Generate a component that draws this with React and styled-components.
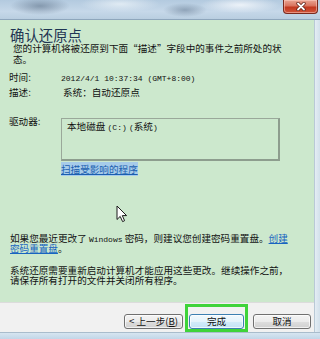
import React from "react";
import styled, { createGlobalStyle } from "styled-components";

const Global = createGlobalStyle`
  html, body { margin: 0; padding: 0; }
  body { width: 320px; height: 339px; overflow: hidden; background: #dbe6ef; }
`;

const Window = styled.div`
  position: relative;
  width: 320px;
  height: 339px;
  display: flex;
  flex-direction: column;
  overflow: hidden;
  font-family: "Noto Sans CJK SC", "Noto Sans", sans-serif;
  color: #111111;
`;

const TitleBar = styled.div`
  flex: none;
  height: 19px;
  display: flex;
  justify-content: flex-end;
  align-items: flex-start;
  padding-right: 2px;
  border-bottom: 1px solid #8ea6bc;
  background:
    radial-gradient(ellipse 30px 9px at 40px 6px, rgba(95, 115, 138, 0.6), transparent),
    radial-gradient(ellipse 22px 7px at 185px 10px, rgba(100, 122, 146, 0.55), transparent),
    radial-gradient(ellipse 40px 8px at 120px 4px, rgba(240, 246, 250, 0.7), transparent),
    radial-gradient(ellipse 40px 8px at 240px 5px, rgba(245, 248, 252, 0.85), transparent),
    linear-gradient(to bottom, #b3cadf 0%, #c6d8e9 60%, #b9cee0 100%);
`;

const CloseButton = styled.div`
  width: 35px;
  height: 14px;
  box-sizing: border-box;
  border: 1px solid #7a2a1e;
  border-top: none;
  border-radius: 0 0 4px 4px;
  background: linear-gradient(to bottom, #e9a593 0%, #d9735e 45%, #c2381f 55%, #d0553b 100%);
  display: flex;
  align-items: center;
  justify-content: center;
  box-shadow: inset 0 0 0 1px rgba(255, 210, 200, 0.5);
`;

const Middle = styled.div`
  flex: 1;
  display: flex;
  min-height: 0;
`;

const Client = styled.div`
  flex: 1;
  display: flex;
  flex-direction: column;
  min-height: 0;
`;

const RightEdge = styled.div`
  width: 5px;
  flex: none;
  border-left: 1px solid #b9c9d6;
  background: linear-gradient(to right, #e4edf4, #d2e0eb);
`;

const BottomEdge = styled.div`
  flex: none;
  height: 7px;
  box-sizing: border-box;
  border-top: 1px solid #a9bccc;
  background: linear-gradient(to bottom, #d7e5f1, #c2d6e8);
`;

const Panel = styled.div`
  flex: 1;
  min-height: 0;
  overflow: hidden;
  background: #cce8cd;
  display: flex;
  flex-direction: column;
  padding: 7px 0 17px 9px;
  box-sizing: border-box;
`;

const Heading = styled.div`
  flex: none;
  font-size: 14.4px;
  line-height: 16px;
  height: 16px;
  margin-left: 1px;
  color: #1f3553;
`;

const Para = styled.div`
  flex: none;
  font-size: 9.6px;
  line-height: ${(p) => p.$lh || 10}px;
  margin-left: ${(p) => p.$indent || 1}px;
  margin-top: ${(p) => p.$mt || 0}px;
  white-space: nowrap;
`;

const Line = styled.div`
  height: ${(p) => p.$lh || 10}px;
`;

const Ascii = styled.span`
  font-family: "Liberation Mono", "DejaVu Sans Mono", monospace;
  font-size: 8px;
`;

const InfoGrid = styled.div`
  flex: none;
  display: grid;
  grid-template-columns: 52px 1fr;
  margin-top: ${(p) => p.$mt}px;
  font-size: 9.6px;
  line-height: 12.5px;
  align-items: start;
`;

const Label = styled.div`
  white-space: nowrap;
`;

const Value = styled.div`
  white-space: nowrap;
  padding-left: ${(p) => p.$pl || 0}px;
`;

const ListBox = styled.div`
  margin-top: 3px;
  width: 219px;
  height: 43px;
  box-sizing: border-box;
  border-top: 1px solid #9aa89a;
  border-left: 1px solid #9aa89a;
  border-right: 2px solid #8d9d8e;
  border-bottom: 2px solid #8d9d8e;
  padding: 1px 5px;
  line-height: 12px;
`;

const LinkRow = styled.div`
  flex: none;
  margin: 3px 0 0 52px;
  font-size: 9.6px;
  line-height: 10px;
`;

const Selected = styled.span`
  background: #a6cbe9;
  color: #1b5fb0;
  text-decoration: underline;
`;

const Link = styled.span`
  color: #1864c0;
  text-decoration: underline;
`;

const BottomGroup = styled.div`
  margin-top: auto;
  display: flex;
  flex-direction: column;
`;

const Footer = styled.div`
  flex: none;
  height: 30px;
  box-sizing: border-box;
  background: #f1f1f1;
  border-top: 1px solid #dcdcdc;
  display: flex;
  justify-content: flex-end;
  align-items: flex-start;
  padding-right: 3px;
`;

const Button = styled.div`
  width: ${(p) => p.$w}px;
  height: 15px;
  box-sizing: border-box;
  margin-top: ${(p) => p.$mt || 0}px;
  margin-left: ${(p) => p.$ml || 0}px;
  border: 1px solid ${(p) => (p.$default ? "#3c7fb1" : "#707070")};
  border-radius: 3px;
  background: ${(p) =>
    p.$default
      ? "linear-gradient(to bottom, #f2f9fd 0%, #e4f3fb 50%, #d2ebf9 51%, #c4e3f5 100%)"
      : "linear-gradient(to bottom, #f4f4f4 0%, #ebebeb 50%, #dedede 51%, #d0d0d0 100%)"};
  box-shadow: inset 0 0 0 1px rgba(255, 255, 255, 0.7);
  font-size: 9.6px;
  line-height: 13px;
  text-align: center;
  white-space: nowrap;
`;

const Highlight = styled.div`
  margin: 1px 0 0 2px;
  width: 63px;
  height: 28px;
  box-sizing: border-box;
  border: 3px solid #3fd33a;
  display: flex;
  justify-content: center;
  align-items: flex-start;
`;

const Cursor = styled.svg`
  position: absolute;
  left: 116px;
  top: 205px;
`;

export default function App() {
  return (
    <>
      <Global />
      <Window>
        <TitleBar>
          <CloseButton>
            <svg width="10" height="9" viewBox="0 0 10 9">
              <path d="M2 1.5 L8 7.5 M8 1.5 L2 7.5" stroke="#5a1a10" strokeWidth="3.2" strokeLinecap="round" />
              <path d="M2 1.5 L8 7.5 M8 1.5 L2 7.5" stroke="#ffffff" strokeWidth="1.8" strokeLinecap="round" />
            </svg>
          </CloseButton>
        </TitleBar>
        <Middle>
          <Client>
            <Panel>
              <Heading>确认还原点</Heading>
              <Para $lh={11} $indent={4}>
                <Line $lh={11}>您的计算机将被还原到下面“描述”字段中的事件之前所处的状</Line>
                <Line $lh={11}>态。</Line>
              </Para>
              <InfoGrid $mt={6}>
                <Label>时间:</Label>
                <Value>
                  <Ascii>2012/4/1 10:37:34 (GMT+8:00)</Ascii>
                </Value>
                <Label>描述:</Label>
                <Value $pl={2}>系统：自动还原点</Value>
              </InfoGrid>
              <InfoGrid $mt={17}>
                <Label>驱动器:</Label>
                <ListBox>
                  本地磁盘 <Ascii>(C:)</Ascii> <Ascii>(</Ascii>系统<Ascii>)</Ascii>
                </ListBox>
              </InfoGrid>
              <LinkRow>
                <Selected>扫描受影响的程序</Selected>
              </LinkRow>
              <BottomGroup>
                <Para>
                  <Line>
                    如果您最近更改了 <Ascii>Windows</Ascii> 密码，则建议您创建密码重置盘。<Link>创建</Link>
                  </Line>
                  <Line>
                    <Link>密码重置盘</Link>。
                  </Line>
                </Para>
                <Para $mt={12}>
                  <Line>系统还原需要重新启动计算机才能应用这些更改。继续操作之前，</Line>
                  <Line>请保存所有打开的文件并关闭所有程序。</Line>
                </Para>
              </BottomGroup>
            </Panel>
            <Footer>
              <Button $w={59} $mt={11}>
                &lt; 上一步(<u>B</u>)
              </Button>
              <Highlight>
                <Button $w={55} $mt={7} $default>
                  完成
                </Button>
              </Highlight>
              <Button $w={58} $mt={11} $ml={5}>
                取消
              </Button>
            </Footer>
          </Client>
          <RightEdge />
        </Middle>
        <BottomEdge />
        <Cursor width="12" height="18" viewBox="0 0 12 18">
          <path
            d="M1 1 L1 14.5 L4.2 11.4 L6.6 16.6 L8.6 15.7 L6.3 10.6 L10.6 10.6 Z"
            fill="#ffffff"
            stroke="#1a1a1a"
            strokeWidth="1"
            strokeLinejoin="round"
          />
        </Cursor>
      </Window>
    </>
  );
}
